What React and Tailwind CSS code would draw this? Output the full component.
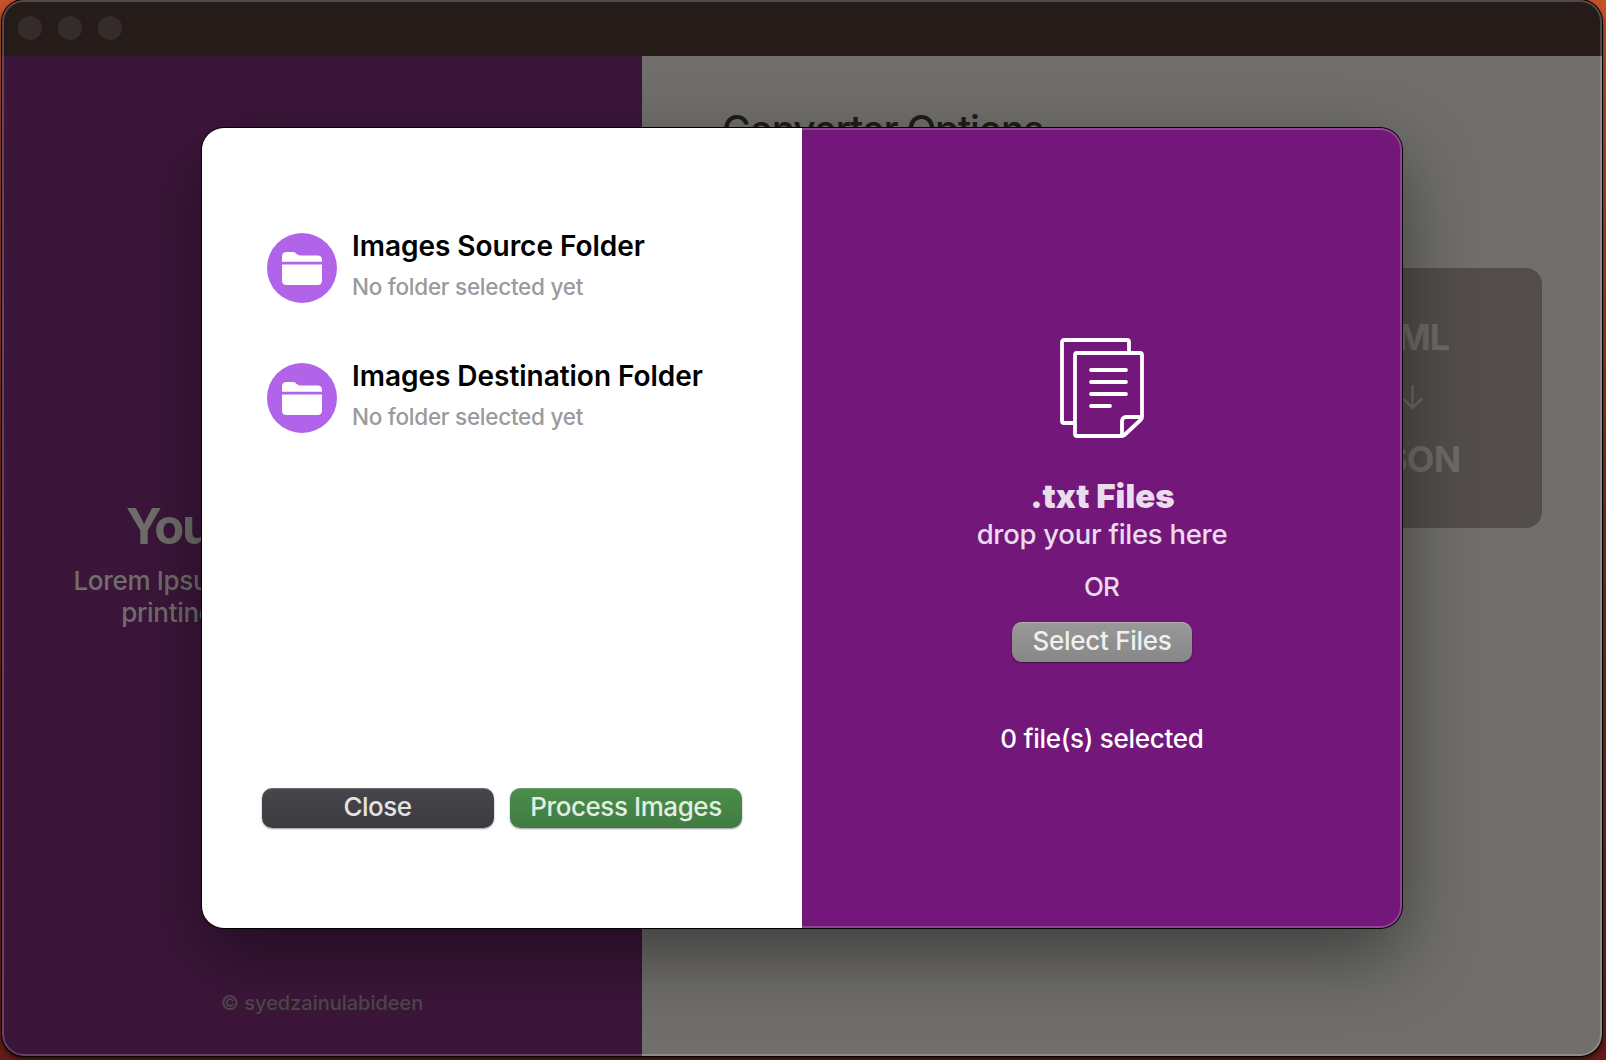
import React from "react";

function FolderBadge() {
  return (
    <span className="mt-1 flex size-[70px] shrink-0 items-center justify-center rounded-full bg-[#b163ea]">
      <svg width="40" height="33" viewBox="0 0 40 33" fill="#fff">
        <path d="M0 9.800V4.6C0 1.6 1.6 0 4.4 0h6c1.600 0 2.600.4 3.700 1.400l1 .9c.9.8 1.600 1.100 2.900 1.100h17.600c2.800 0 4.400 1.500 4.400 4.400v2Z" />
        <path d="M0 12.400h40v16c0 3-1.600 4.600-4.600 4.600H4.600C1.600 33 0 31.400 0 28.400Z" />
      </svg>
    </span>
  );
}

function FolderRow({ title }) {
  return (
    <div className="flex h-[74px] items-start gap-[15px]">
      <FolderBadge />
      <div className="whitespace-nowrap">
        <div className="text-[28px] leading-[34px] font-semibold tracking-[-0.03px] text-black">{title}</div>
        <div className="mt-[9px] text-[22.5px] leading-[30px] tracking-[-0.26px] text-[#9a9a9d]">
          No folder selected yet
        </div>
      </div>
    </div>
  );
}

function DocumentsIcon() {
  return (
    <svg
      width="84"
      height="100"
      viewBox="0 0 84 100"
      fill="none"
      stroke="#fff"
      strokeWidth="3.8"
      strokeLinecap="round"
      strokeLinejoin="round"
    >
      <path d="M69 14V4a2 2 0 0 0-2-2H4a2 2 0 0 0-2 2v79a2 2 0 0 0 2 2h10" />
      <path d="M82 79V17a2 2 0 0 0-2-2H17a2 2 0 0 0-2 2v79a2 2 0 0 0 2 2h45c1 0 1.700-.4 2.500-1L81 81.500c.7-.7 1-1.500 1-2.500Z" />
      <path d="M62 97.500V83a4 4 0 0 1 4-4h15.500" />
      <path d="M31 32h35M31 44h35M31 56h35M31 68h19" />
    </svg>
  );
}

export default function App() {
  return (
    <div className="relative h-[1060px] w-[1606px] overflow-hidden bg-linear-to-b from-[#c4522a] via-[#7c2c14] to-[#641c1a] font-['Inter',sans-serif] font-[450]">
      <div className="relative ml-[2px] flex h-[1056px] w-[1600px] flex-col overflow-hidden rounded-[22px] shadow-[0_0_0_1px_#000,0_3px_6px_rgba(0,0,0,0.7)]">
        <header className="flex h-14 shrink-0 items-center gap-4 bg-[#251c1a] pl-4">
          <span className="size-6 rounded-full bg-[#352c2a]" />
          <span className="size-6 rounded-full bg-[#352c2a]" />
          <span className="size-6 rounded-full bg-[#352c2a]" />
        </header>

        <div className="flex grow">
          <aside className="flex w-[640px] shrink-0 flex-col items-center bg-[#3c163a] pt-[442px] text-[#706f6b]">
            <h1 className="w-full pl-[124px] text-[49px] leading-[58px] font-bold tracking-[-2.2px]">Your</h1>
            <p className="mt-[9px] text-center text-[26px] leading-8 tracking-[-0.32px] whitespace-nowrap">
              Lorem Ipsum is simply dummy text of the
              <br />
              printing and typesetting industry.
            </p>
            <p className="mt-auto mb-[41px] text-[20px] leading-6 tracking-[-0.02px] text-[#4f484c]">
              © syedzainulabideen
            </p>
          </aside>

          <main className="flex grow flex-col bg-[#706f6c] pt-[51px]">
            <h2 className="pl-20 text-[39px] leading-[46px] font-[450] tracking-[-1.22px] text-[#1f1c1b]">
              Converter Options
            </h2>
            <div className="mt-[115px] mr-[60px] flex size-[260px] flex-col items-center self-end rounded-2xl bg-[#534e4c] pt-[47px] text-[36px] leading-[44px] font-bold text-[#6d6c6a]">
              <span className="mr-[3px] tracking-[-1px]">XML</span>
              <svg
                className="mt-[26px]"
                width="22"
                height="24"
                viewBox="0 0 22 24"
                fill="none"
                stroke="currentColor"
                strokeWidth="2.3"
                strokeLinecap="round"
                strokeLinejoin="round"
              >
                <path d="M11.500 1.200v21.600M2.500 14l9 9 9-9" />
              </svg>
              <span className="mt-7 tracking-[-0.8px]">JSON</span>
            </div>
          </main>
        </div>

        <div className="pointer-events-none absolute inset-0 rounded-[22px] border-2 border-white/20" />
      </div>

      <div className="absolute inset-0 flex items-start justify-center overflow-hidden pt-[128px] pr-[2px]">
        <section className="relative flex h-[800px] w-[1200px] overflow-hidden rounded-[22px] shadow-[0_0_0_1px_#000,0_28px_76px_rgba(0,0,0,0.45)]">
          <div className="flex w-[600px] flex-col bg-white pt-[101px] pb-[100px]">
            <div className="flex flex-col gap-14 pl-[65px]">
              <FolderRow title="Images Source Folder" />
              <FolderRow title="Images Destination Folder" />
            </div>
            <div className="mt-auto flex gap-4 px-[60px] text-[26px] leading-[38px] whitespace-nowrap">
              <button className="flex h-10 w-[232px] items-start justify-center rounded-[10px] bg-linear-to-b from-[#47464b] to-[#3c3b40] pr-px tracking-[-0.5px] text-[#e3e3e4] shadow-[inset_0_1px_0_rgba(255,255,255,0.2),0_1px_2px_rgba(0,0,0,0.4)]">
                Close
              </button>
              <button className="flex h-10 w-[232px] items-start justify-center rounded-[10px] bg-linear-to-b from-[#4a8e4a] to-[#407b41] tracking-[-0.43px] text-[#e2eee2] shadow-[inset_0_1px_0_rgba(255,255,255,0.2),0_1px_2px_rgba(0,0,0,0.4)]">
                Process Images
              </button>
            </div>
          </div>

          <div className="flex w-[600px] flex-col items-center bg-[#73177a] pt-[210px] text-[#eadcec]">
            <DocumentsIcon />
            <h3 className="mt-[39px] ml-px text-[33px] leading-[38px] font-black tracking-[0.08px]">.txt Files</h3>
            <p className="mt-px text-[27.5px] leading-9 tracking-[-0.27px]">drop your files here</p>
            <p className="mt-5 mr-px text-[26px] leading-[30px] tracking-[-0.8px]">OR</p>
            <button className="mt-5 flex h-10 w-[180px] items-start justify-center rounded-[10px] bg-linear-to-b from-[#999] to-[#878787] text-[26px] leading-[38px] tracking-[-0.27px] text-[#f0f0f0] shadow-[inset_0_1px_0_rgba(255,255,255,0.25),0_1px_2px_rgba(0,0,0,0.4)]">
              Select Files
            </button>
            <p className="mt-[62px] text-[26px] leading-[30px] tracking-[-0.27px] text-white">0 file(s) selected</p>
          </div>

          <div className="pointer-events-none absolute inset-0 rounded-[22px] border-2 border-white/20" />
        </section>
      </div>
    </div>
  );
}
